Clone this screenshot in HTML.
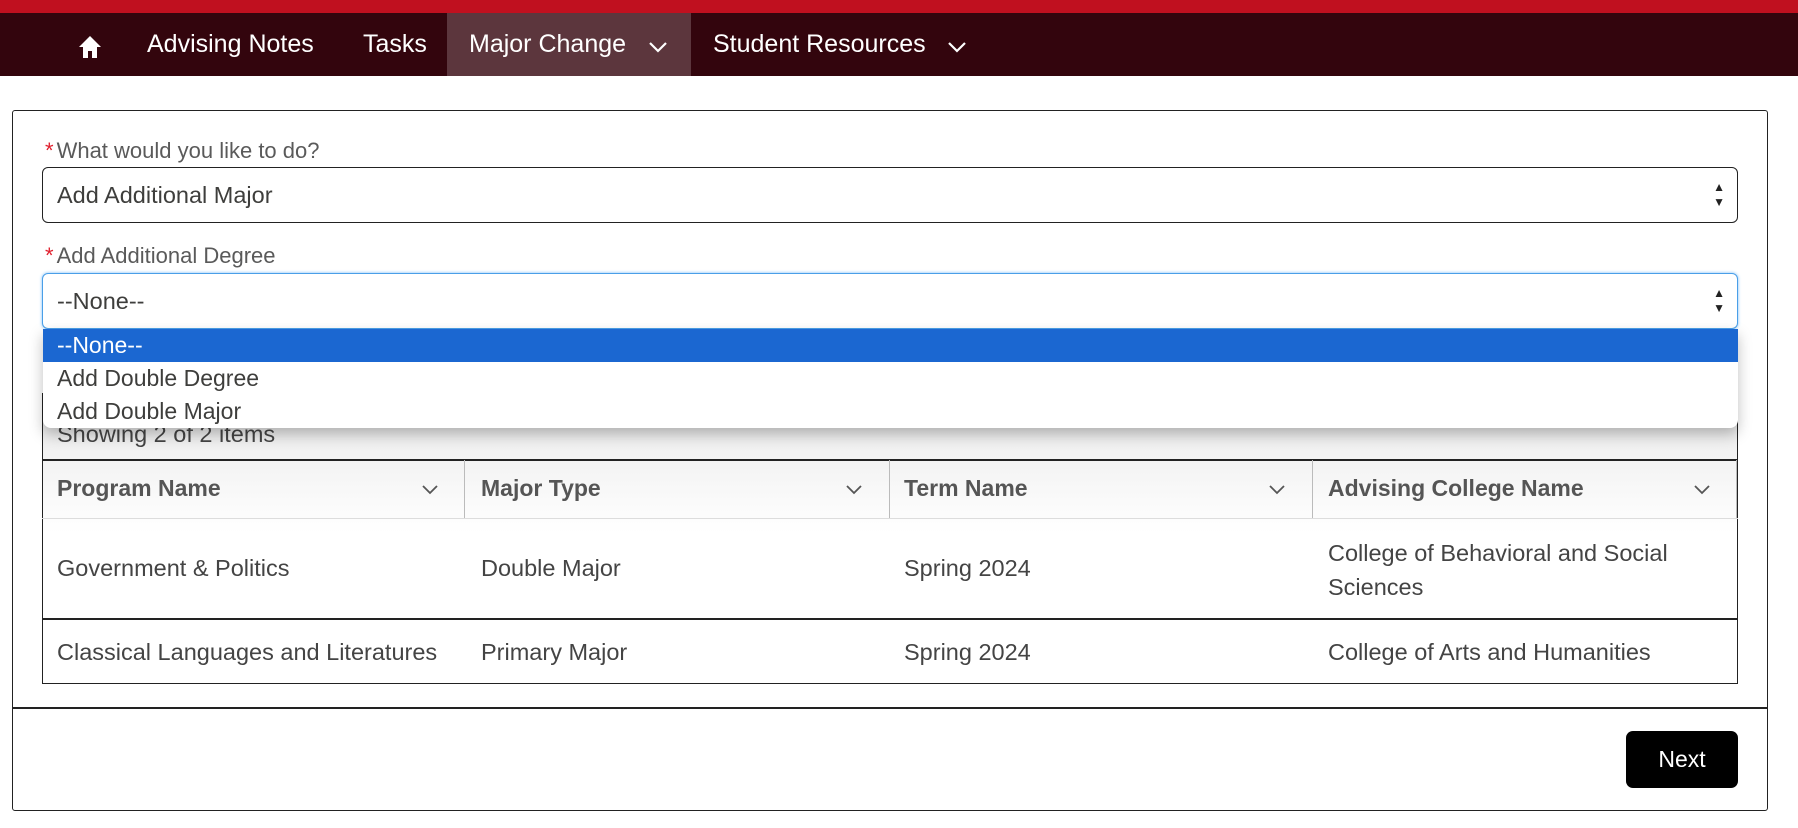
<!DOCTYPE html>
<html><head><meta charset="utf-8"><style>
*{box-sizing:border-box;margin:0;padding:0}
body{width:1798px;height:828px;background:#fff;font-family:"Liberation Sans",sans-serif;color:#3e3e3c;position:relative;overflow:hidden}
.abs{position:absolute}
.red{left:0;top:0;width:1798px;height:13px;background:#c0101f}
.nav{left:0;top:13px;width:1798px;height:63px;background:#33050d}
.nav span{position:absolute;top:17px;color:#fff;font-size:25px;letter-spacing:0}
.hl{left:447px;top:13px;width:244px;height:63px;background:#5c363d}
.box{left:12px;top:110px;width:1756px;height:701px;border:1.5px solid #222;border-radius:3px}
.sep{left:12px;top:707px;width:1756px;height:1.5px;background:#222}
.lbl{font-size:22px;color:#5a5a5a}
.lbl b{color:#e0202e;font-weight:normal;margin-right:3px}
.sel{border:1.5px solid #222;border-radius:6px;font-size:23.5px;padding-left:14px;display:flex;align-items:center;background:#fff}
.arr{position:absolute;right:12px;font-size:12px;line-height:15px;color:#222}
.dd{left:43px;top:329px;width:1695px;height:99px;background:#fff;border-radius:0 0 8px 8px;box-shadow:0 6px 14px rgba(0,0,0,.25);font-size:23px}
.dd div{height:33px;line-height:33px;padding-left:14px}
.tbl{left:42px;top:393px;width:1696px;height:291px;border:1.5px solid #222;border-top:none;background:linear-gradient(#e0e0e0,#f2f2f2 60px,#fff 140px)}
.cell{position:absolute;font-size:23.5px;color:#444}
.hd{font-weight:bold;color:#555;font-size:23px}
.vl{position:absolute;top:460px;width:1px;height:58px;background:#bbb}
.chev{position:absolute;top:482px;width:16px;height:14px}
</style></head><body>
<div class="abs red"></div>
<div class="abs nav"></div>
<div class="abs hl"></div>
<svg class="abs" style="left:77px;top:34px" width="26" height="26" viewBox="0 0 26 26"><path d="M13 2 L24 13 H20 V24 H15 V17 H11 V24 H6 V13 H2 Z" fill="#fff"/></svg>
<div class="abs nav" style="background:none">
<span style="left:147px">Advising Notes</span>
<span style="left:363px">Tasks</span>
<span style="left:469px">Major Change</span>
<span style="left:713px">Student Resources</span>
</div>
<svg class="abs" style="left:648px;top:41px" width="20" height="12"><path d="M2 2 L10 10 L18 2" stroke="#fff" stroke-width="2.2" fill="none"/></svg>
<svg class="abs" style="left:947px;top:41px" width="20" height="12"><path d="M2 2 L10 10 L18 2" stroke="#fff" stroke-width="2.2" fill="none"/></svg>

<div class="abs box"></div>
<div class="abs sep"></div>
<div class="abs lbl" style="left:45px;top:138px"><b>*</b>What would you like to do?</div>
<div class="abs sel" style="left:42px;top:167px;width:1696px;height:56px">Add Additional Major<div class="arr">▲<br>▼</div></div>
<div class="abs lbl" style="left:45px;top:243px"><b>*</b>Add Additional Degree</div>
<div class="abs sel" style="left:42px;top:273px;width:1696px;height:56px;border-color:#4a9fe8;box-shadow:0 0 3px #7bbcf5">--None--<div class="arr">▲<br>▼</div></div>

<div class="abs tbl"></div>
<div class="cell" style="left:57px;top:421px">Showing 2 of 2 items</div>
<div class="abs" style="left:42px;top:459px;width:1696px;height:1.5px;background:#222"></div>
<div class="abs" style="left:42px;top:518px;width:1696px;height:1px;background:#ddd"></div>
<div class="abs" style="left:42px;top:618px;width:1696px;height:1.5px;background:#222"></div>
<div class="vl" style="left:464px"></div><div class="vl" style="left:889px"></div><div class="vl" style="left:1312px"></div><div class="vl" style="left:1736px"></div>
<div class="cell hd" style="left:57px;top:475px">Program Name</div>
<div class="cell hd" style="left:481px;top:475px">Major Type</div>
<div class="cell hd" style="left:904px;top:475px">Term Name</div>
<div class="cell hd" style="left:1328px;top:475px">Advising College Name</div>
<svg class="chev" style="left:422px" viewBox="0 0 16 14"><path d="M1 4 L8 11 L15 4" stroke="#555" stroke-width="1.8" fill="none"/></svg>
<svg class="chev" style="left:846px" viewBox="0 0 16 14"><path d="M1 4 L8 11 L15 4" stroke="#555" stroke-width="1.8" fill="none"/></svg>
<svg class="chev" style="left:1269px" viewBox="0 0 16 14"><path d="M1 4 L8 11 L15 4" stroke="#555" stroke-width="1.8" fill="none"/></svg>
<svg class="chev" style="left:1694px" viewBox="0 0 16 14"><path d="M1 4 L8 11 L15 4" stroke="#555" stroke-width="1.8" fill="none"/></svg>
<div class="cell" style="left:57px;top:555px">Government &amp; Politics</div>
<div class="cell" style="left:481px;top:555px">Double Major</div>
<div class="cell" style="left:904px;top:555px">Spring 2024</div>
<div class="cell" style="left:1328px;top:536px;line-height:34px">College of Behavioral and Social<br>Sciences</div>
<div class="cell" style="left:57px;top:639px">Classical Languages and Literatures</div>
<div class="cell" style="left:481px;top:639px">Primary Major</div>
<div class="cell" style="left:904px;top:639px">Spring 2024</div>
<div class="cell" style="left:1328px;top:639px">College of Arts and Humanities</div>

<div class="abs dd">
<div style="background:#1b67d1;color:#fff">--None--</div>
<div>Add Double Degree</div>
<div>Add Double Major</div>
</div>

<div class="abs" style="left:1626px;top:731px;width:112px;height:57px;background:#000;border-radius:7px;color:#fff;font-size:23px;text-align:center;line-height:57px">Next</div>
</body></html>
